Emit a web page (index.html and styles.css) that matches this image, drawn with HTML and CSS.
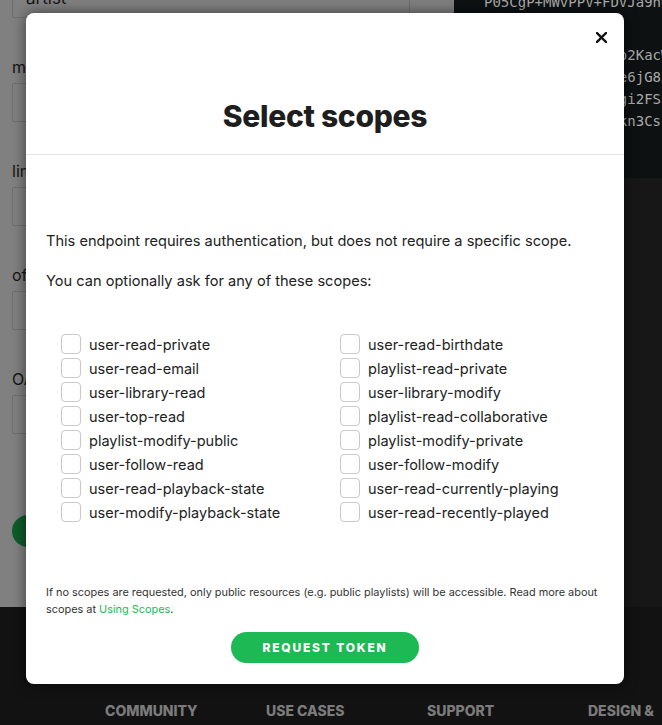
FILE: index.html
```html
<!DOCTYPE html>
<html lang="en">
<head>
<meta charset="utf-8">
<title>Select scopes</title>
<link rel="stylesheet" href="styles.css">
</head>
<body>
<div class="page">
  <div class="main">
    <div class="form-col">
      <div class="input input-first">artist</div>
      <div class="field">
        <div class="label">market</div>
        <div class="input"></div>
      </div>
      <div class="field">
        <div class="label">limit</div>
        <div class="input"></div>
      </div>
      <div class="field">
        <div class="label">offset</div>
        <div class="input"></div>
      </div>
      <div class="field">
        <div class="label">OAuth Token</div>
        <div class="input"></div>
      </div>
      <div class="try-btn">TRY IT</div>
    </div>
    <div class="code-col">
      <div class="code">
        <div class="code-line code-line-first">P05CgP+MWvPPV+FDVJa9h0xQ</div>
        <div class="code-line">"</div>
        <div class="code-line">BQDx3vK9mLp1aR7to2KacW9</div>
        <div class="code-line">Zt8LmQ4pWcR2nYbXe6jG83Q</div>
        <div class="code-line">hN5sKd0TfVw7uJcAgi2FS2r</div>
        <div class="code-line">Pq9xMb3LyHe1oUvZkn3Csc4</div>
      </div>
      <div class="code-rest"></div>
    </div>
  </div>
  <footer class="site-footer">
    <span>COMMUNITY</span>
    <span>USE CASES</span>
    <span>SUPPORT</span>
    <span class="wrap">DESIGN &amp; BRANDING</span>
  </footer>
</div>

<div class="modal">
  <div class="modal-header">
    <button class="close" aria-label="Close">
      <svg width="11" height="11" viewBox="0 0 11 11"><path d="M1 1L10 10M10 1L1 10" stroke="#111" stroke-width="2.4" stroke-linecap="square"/></svg>
    </button>
    <h1 class="title">Select scopes</h1>
  </div>
  <div class="modal-body">
    <p class="intro">This endpoint requires authentication, but does not require a specific scope.</p>
    <p class="intro">You can optionally ask for any of these scopes:</p>
    <div class="scopes">
      <div class="scope-col">
        <label class="scope"><span class="box"></span>user-read-private</label>
        <label class="scope"><span class="box"></span>user-read-email</label>
        <label class="scope"><span class="box"></span>user-library-read</label>
        <label class="scope"><span class="box"></span>user-top-read</label>
        <label class="scope"><span class="box"></span>playlist-modify-public</label>
        <label class="scope"><span class="box"></span>user-follow-read</label>
        <label class="scope"><span class="box"></span>user-read-playback-state</label>
        <label class="scope"><span class="box"></span>user-modify-playback-state</label>
      </div>
      <div class="scope-col">
        <label class="scope"><span class="box"></span>user-read-birthdate</label>
        <label class="scope"><span class="box"></span>playlist-read-private</label>
        <label class="scope"><span class="box"></span>user-library-modify</label>
        <label class="scope"><span class="box"></span>playlist-read-collaborative</label>
        <label class="scope"><span class="box"></span>playlist-modify-private</label>
        <label class="scope"><span class="box"></span>user-follow-modify</label>
        <label class="scope"><span class="box"></span>user-read-currently-playing</label>
        <label class="scope"><span class="box"></span>user-read-recently-played</label>
      </div>
    </div>
    <p class="note">If no scopes are requested, only public resources (e.g. public playlists) will be accessible. Read more about scopes at <a class="link">Using Scopes</a>.</p>
    <div class="actions">
      <button class="request">REQUEST TOKEN</button>
    </div>
  </div>
</div>
</body>
</html>
```
FILE: styles.css
```css
* { box-sizing: border-box; }

html, body {
  margin: 0;
  padding: 0;
  width: 662px;
  height: 725px;
  overflow: hidden;
  background: #121212;
  font-family: Inter, "Liberation Sans", sans-serif;
}

.page {
  display: flex;
  flex-direction: column;
  height: 725px;
  width: 662px;
  overflow: hidden;
}

.main {
  flex: none;
  display: grid;
  grid-template-columns: 454px 1fr;
  height: 607px;
  overflow: hidden;
}

.form-col {
  background: #808080;
  padding-left: 12px;
  display: flex;
  flex-direction: column;
  align-items: flex-start;
}

.input {
  width: 398px;
  height: 39px;
  border: 1px solid #6e6e6e;
  border-radius: 2px;
  color: #141414;
  font-size: 17px;
  line-height: 37px;
  padding-left: 13px;
}

.input-first {
  margin-top: -21px;
}

.field {
  margin-top: 38px;
  display: flex;
  flex-direction: column;
  gap: 5px;
}

.label {
  font-size: 16px;
  line-height: 22px;
  color: #151515;
}

.try-btn {
  margin-top: 81px;
  height: 32px;
  width: 150px;
  border-radius: 16px;
  background: #0e5c2a;
  color: #7f7f7f;
  font-size: 12px;
  font-weight: 700;
  line-height: 32px;
  text-align: center;
}

.code-col {
  display: flex;
  flex-direction: column;
}

.code {
  height: 178px;
  background: #0d1112;
  padding-left: 30px;
  font-family: "DejaVu Sans Mono", monospace;
  font-size: 14px;
  color: #a9a9a9;
  overflow: hidden;
  white-space: nowrap;
}

.code-line {
  line-height: 22px;
}

.code-line-first {
  margin-top: -9px;
  margin-bottom: 9px;
}

.code-rest {
  flex: 1;
  background: #171717;
}

.site-footer {
  flex: none;
  height: 118px;
  overflow: hidden;
  background: #121212;
  display: grid;
  grid-template-columns: 161px 161px 161px 73px;
  align-items: start;
  padding: 92px 0 0 105px;
  color: #7b7b7b;
  font-size: 14px;
  font-weight: 800;
  line-height: 24px;
  white-space: nowrap;
}

.site-footer .wrap {
  white-space: normal;
}

/* Modal */
.modal {
  position: absolute;
  left: 26px;
  top: 13px;
  width: 598px;
  height: 671px;
  background: #fff;
  border-radius: 8px;
  box-shadow: 0 0 14px rgba(0, 0, 0, 0.55);
  color: #222;
  display: flex;
  flex-direction: column;
}

.modal-header {
  height: 142px;
  border-bottom: 1px solid #e3e3e3;
  display: flex;
  flex-direction: column;
  align-items: center;
  padding: 19px 17px 0;
}

.close {
  align-self: flex-end;
  border: 0;
  background: none;
  padding: 0;
  width: 11px;
  height: 11px;
  display: block;
}

.close svg { display: block; }

.title {
  margin: 55px 0 0;
  font-size: 30px;
  line-height: 36px;
  font-weight: 800;
  color: #1e1e1e;
  letter-spacing: -0.3px;
}

.modal-body {
  padding: 0 20px;
}

.intro {
  margin: 0;
  font-size: 14.6px;
  line-height: 22px;
  color: #222;
}

.intro:first-child { margin-top: 75px; }
.intro + .intro { margin-top: 18px; }

.scopes {
  margin-top: 40px;
  padding-left: 15px;
  display: grid;
  grid-template-columns: 279px 1fr;
}

.scope-col {
  display: flex;
  flex-direction: column;
}

.scope {
  display: flex;
  align-items: center;
  gap: 8px;
  height: 24px;
  font-size: 14.5px;
  color: #222;
}

.box {
  width: 20px;
  height: 20px;
  border: 1px solid #c9c9c9;
  border-radius: 4px;
  background: #fff;
  flex: none;
}

.note {
  margin: 60px 0 0;
  font-size: 10.9px;
  line-height: 17px;
  color: #333;
}

.link {
  color: #1db954;
}

.actions {
  display: flex;
  justify-content: center;
  margin-top: 14px;
}

.request {
  width: 188px;
  height: 31px;
  border: 0;
  border-radius: 16px;
  background: #1db954;
  color: #fff;
  font-family: Inter, "Liberation Sans", sans-serif;
  font-size: 12px;
  font-weight: 800;
  letter-spacing: 1.8px;
  padding: 0;
}
```
